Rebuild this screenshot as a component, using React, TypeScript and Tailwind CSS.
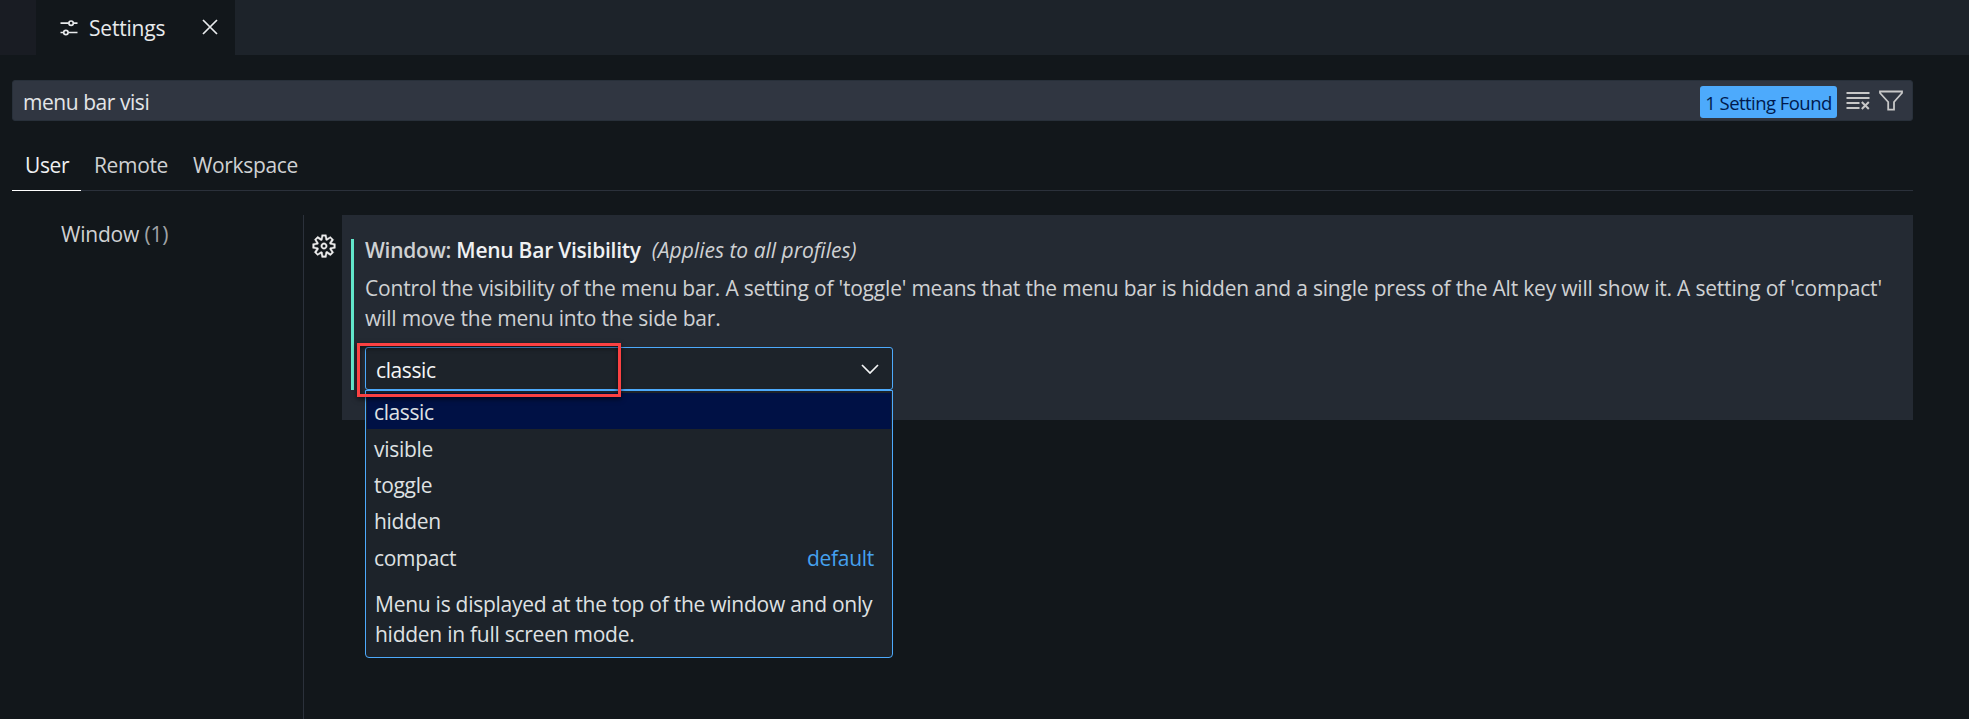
import { VscGear } from "react-icons/vsc";

const options = ["classic", "visible", "toggle", "hidden", "compact"];

function SlidersIcon() {
  return (
    <svg viewBox="0 0 18 16" className="h-4 w-[18px]" fill="none" stroke="currentColor" strokeWidth="1.7">
      <path d="M0.5 3.2H8.6M13.6 3.2H17.5M0.5 12.5H3.4M8.4 12.5H17.5" />
      <circle cx="11.1" cy="3.2" r="2.2" />
      <circle cx="5.9" cy="12.5" r="2.2" />
    </svg>
  );
}

function CloseIcon() {
  return (
    <svg viewBox="0 0 16 16" className="-mt-px size-4" fill="none" stroke="currentColor" strokeWidth="1.7">
      <path d="M1 1L15 15M15 1L1 15" />
    </svg>
  );
}

function ClearIcon() {
  return (
    <svg viewBox="0 0 24 24" className="size-6 shrink-0" fill="none" stroke="currentColor" strokeWidth="1.8">
      <path d="M0.5 4H23.5M0.5 9H23.5M0.5 14H13.5M0.5 19H13.5" />
      <path d="M15.8 13L22.8 20M22.8 13L15.8 20" strokeWidth="2" />
    </svg>
  );
}

function FilterIcon() {
  return (
    <svg viewBox="0 0 24 24" className="size-6 shrink-0" fill="none" stroke="currentColor" strokeWidth="1.8">
      <path d="M1 2.5H23V4L15 13V20.7H9.2V13L1 4Z" />
    </svg>
  );
}

function ChevronIcon() {
  return (
    <svg viewBox="0 0 18 10" className="h-2.5 w-[18px]" fill="none" stroke="currentColor" strokeWidth="1.7">
      <path d="M1 1L9 9L17 1" />
    </svg>
  );
}

export default function App() {
  return (
    <div className="flex h-[719px] w-[1969px] flex-col overflow-hidden bg-[#12171b] font-['Open_Sans','Noto_Sans',sans-serif] text-[21px] leading-[30px] tracking-[-0.2px] text-[#cfd1d3]">
      <header className="flex h-[55px] shrink-0 bg-[#1d232a]">
        <div className="w-9 bg-[#191c23]" />
        <div className="flex w-[199px] items-center bg-[#12171b] pl-6 text-[#e8eaec]">
          <SlidersIcon />
          <span className="ml-[11px] w-[113px] pt-px whitespace-nowrap">Settings</span>
          <CloseIcon />
        </div>
      </header>

      <div className="mt-[25px] ml-3 flex h-[41px] w-[1901px] shrink-0 items-center rounded-[3px] border border-[#28303a] bg-[#303641] pl-2.5 text-[#e3e5e8]">
        <span className="grow pt-0.5 tracking-[-0.45px]">menu bar visi</span>
        <span className="mt-[3px] flex h-8 w-[137px] shrink-0 items-center justify-center rounded-[3px] bg-[#4daafc] pt-px text-[18.5px] tracking-[-0.55px] whitespace-nowrap text-[#001a4d]">1 Setting Found</span>
        <div className="mr-[9px] ml-[9px] flex gap-[9px] text-[#c8c8c8]">
          <ClearIcon />
          <FilterIcon />
        </div>
      </div>

      <nav className="mt-6 ml-3 flex h-[46px] w-[1901px] shrink-0 border-b border-[#2b313b] tracking-[-0.35px]">
        <span className="-mb-px w-[69px] border-b border-white pt-[5px] pl-[13px] text-[#eef0f2]">User</span>
        <span className="w-[99px] pt-[5px] pl-[13px]">Remote</span>
        <span className="pt-[5px] pl-[13px]">Workspace</span>
      </nav>

      <main className="mt-6 flex grow">
        <aside className="w-[303px] pt-1 pl-[61px]">
          Window <span className="text-[#a0a3a6]">(1)</span>
        </aside>
        <div className="flex w-[39px] justify-center border-l border-[#2b313b] pt-[18px] pl-0.5">
          <VscGear className="size-[26px] stroke-[#eeeeee] stroke-[0.2] text-[#eeeeee]" />
        </div>
        <section className="h-[205px] w-[1571px] bg-[#242a33] pt-6 pl-[9px]">
          <div className="h-[151px] border-l-[3px] border-[#62e6cb] pl-[11px]">
            <h2 className="h-[34px] leading-[23px] whitespace-nowrap">
              <span className="font-semibold tracking-[-0.25px]">Window: </span>
              <span className="font-semibold tracking-[-0.25px] text-[#eff1f3]">Menu Bar Visibility</span>
              <i className="ml-[11px] tracking-normal">(Applies to all profiles)</i>
            </h2>
            <p className="h-[74px] whitespace-nowrap">
              Control the visibility of the menu bar. A setting of 'toggle' means that the menu bar is hidden and a single press of the Alt key will show it. A setting of 'compact'
              <br />
              will move the menu into the side bar.
            </p>
            <div className="relative w-[528px]">
              <div className="flex h-[43px] items-center justify-between rounded-[3px] border border-[#4daafc] bg-[#1d232a] pr-[13px] pl-2.5 tracking-[-0.4px] text-[#f4f5f6]">
                <span className="pt-0.5">classic</span>
                <ChevronIcon />
              </div>
              <div className="absolute top-[43px] left-0 h-[268px] w-[528px] rounded-b-[4px] border border-[#4daafc] bg-[#1d232a] px-px pt-0.5 tracking-[-0.3px] text-[#dfe1e3]">
                {options.map((name, i) => (
                  <div
                    key={name}
                    className={i === 0 ? "flex h-9 items-center bg-[#001145] px-[7px] pt-0.5 tracking-[-0.4px]" : "flex h-[36.3px] items-center justify-between pt-[3px] pr-[17px] pl-[7px]"}
                  >
                    <span>{name}</span>
                    {name === "compact" && <span className="text-[#45a1ef]">default</span>}
                  </div>
                ))}
                <p className="mt-[15px] pl-2 tracking-[-0.26px] whitespace-nowrap">
                  Menu is displayed at the top of the window and only
                  <br />
                  hidden in full screen mode.
                </p>
              </div>
              <div className="absolute top-[-4px] -left-2 h-[54px] w-[264px] border-[3px] border-[#fb4142] shadow-[0_2px_5px_rgba(0,0,0,0.6),inset_0_2px_5px_rgba(0,0,0,0.6)]" />
            </div>
          </div>
        </section>
      </main>
    </div>
  );
}
